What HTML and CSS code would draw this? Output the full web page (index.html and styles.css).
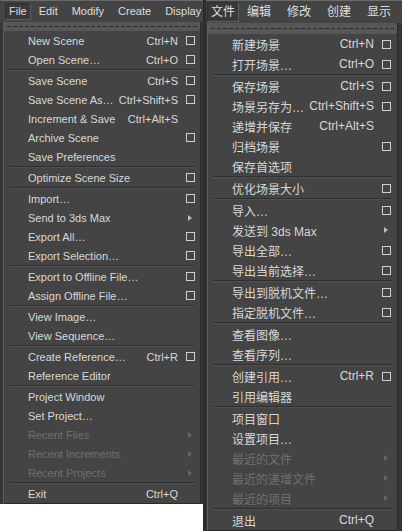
FILE: index.html
```html
<!DOCTYPE html>
<html lang="zh-CN">
<head>
<meta charset="UTF-8" />
<title>File menu</title>
<link rel="stylesheet" href="styles.css">
</head>
<body>
<div class="screen">
  <section class="panel en">
    <nav class="menubar">
      <span class="top on">File</span><span class="top">Edit</span><span class="top">Modify</span><span class="top">Create</span><span class="top">Display</span>
    </nav>
    <div class="dropdown">
      <div class="tearoff"><i></i></div>
      <div class="item"><span class="label">New Scene</span><span class="key">Ctrl+N</span><span class="box"></span></div>
      <div class="item"><span class="label">Open Scene…</span><span class="key">Ctrl+O</span><span class="box"></span></div>
      <div class="sep"></div>
      <div class="item"><span class="label">Save Scene</span><span class="key">Ctrl+S</span><span class="box"></span></div>
      <div class="item"><span class="label">Save Scene As…</span><span class="key">Ctrl+Shift+S</span><span class="box"></span></div>
      <div class="item"><span class="label">Increment &amp; Save</span><span class="key">Ctrl+Alt+S</span></div>
      <div class="item"><span class="label">Archive Scene</span><span class="box"></span></div>
      <div class="item"><span class="label">Save Preferences</span></div>
      <div class="sep"></div>
      <div class="item"><span class="label">Optimize Scene Size</span><span class="box"></span></div>
      <div class="sep"></div>
      <div class="item"><span class="label">Import…</span><span class="box"></span></div>
      <div class="item"><span class="label">Send to 3ds Max</span><span class="arrow"></span></div>
      <div class="item"><span class="label">Export All…</span><span class="box"></span></div>
      <div class="item"><span class="label">Export Selection…</span><span class="box"></span></div>
      <div class="sep"></div>
      <div class="item"><span class="label">Export to Offline File…</span><span class="box"></span></div>
      <div class="item"><span class="label">Assign Offline File…</span><span class="box"></span></div>
      <div class="sep"></div>
      <div class="item"><span class="label">View Image…</span></div>
      <div class="item"><span class="label">View Sequence…</span></div>
      <div class="sep"></div>
      <div class="item"><span class="label">Create Reference…</span><span class="key">Ctrl+R</span><span class="box"></span></div>
      <div class="item"><span class="label">Reference Editor</span></div>
      <div class="sep"></div>
      <div class="item"><span class="label">Project Window</span></div>
      <div class="item"><span class="label">Set Project…</span></div>
      <div class="item off"><span class="label">Recent Files</span><span class="arrow"></span></div>
      <div class="item off"><span class="label">Recent Increments</span><span class="arrow"></span></div>
      <div class="item off"><span class="label">Recent Projects</span><span class="arrow"></span></div>
      <div class="sep"></div>
      <div class="item"><span class="label">Exit</span><span class="key">Ctrl+Q</span></div>
    </div>
  </section>
  <div class="divider"></div>
  <section class="panel zh">
    <nav class="menubar">
      <span class="top on">文件</span><span class="top">编辑</span><span class="top">修改</span><span class="top">创建</span><span class="top">显示</span>
    </nav>
    <div class="dropdown">
      <div class="tearoff"><i></i></div>
      <div class="item"><span class="label">新建场景</span><span class="key">Ctrl+N</span><span class="box"></span></div>
      <div class="item"><span class="label">打开场景…</span><span class="key">Ctrl+O</span><span class="box"></span></div>
      <div class="sep"></div>
      <div class="item"><span class="label">保存场景</span><span class="key">Ctrl+S</span><span class="box"></span></div>
      <div class="item"><span class="label">场景另存为…</span><span class="key">Ctrl+Shift+S</span><span class="box"></span></div>
      <div class="item"><span class="label">递增并保存</span><span class="key">Ctrl+Alt+S</span></div>
      <div class="item"><span class="label">归档场景</span><span class="box"></span></div>
      <div class="item"><span class="label">保存首选项</span></div>
      <div class="sep"></div>
      <div class="item"><span class="label">优化场景大小</span><span class="box"></span></div>
      <div class="sep"></div>
      <div class="item"><span class="label">导入…</span><span class="box"></span></div>
      <div class="item"><span class="label">发送到 3ds Max</span><span class="arrow"></span></div>
      <div class="item"><span class="label">导出全部…</span><span class="box"></span></div>
      <div class="item"><span class="label">导出当前选择…</span><span class="box"></span></div>
      <div class="sep"></div>
      <div class="item"><span class="label">导出到脱机文件…</span><span class="box"></span></div>
      <div class="item"><span class="label">指定脱机文件…</span><span class="box"></span></div>
      <div class="sep"></div>
      <div class="item"><span class="label">查看图像…</span></div>
      <div class="item"><span class="label">查看序列…</span></div>
      <div class="sep"></div>
      <div class="item"><span class="label">创建引用…</span><span class="key">Ctrl+R</span><span class="box"></span></div>
      <div class="item"><span class="label">引用编辑器</span></div>
      <div class="sep"></div>
      <div class="item"><span class="label">项目窗口</span></div>
      <div class="item"><span class="label">设置项目…</span></div>
      <div class="item off"><span class="label">最近的文件</span><span class="arrow"></span></div>
      <div class="item off"><span class="label">最近的递增文件</span><span class="arrow"></span></div>
      <div class="item off"><span class="label">最近的项目</span><span class="arrow"></span></div>
      <div class="sep"></div>
      <div class="item"><span class="label">退出</span><span class="key">Ctrl+Q</span></div>
    </div>
  </section>
</div>
</body>
</html>
```

FILE: styles.css
```css
html,body {margin:0;padding:0;background:#fff;font-family:"Liberation Sans","Noto Sans CJK SC",sans-serif;color:#d8d8d8;}
.screen {display:flex;align-items:flex-start;width:402px;height:531px;overflow:hidden;}

.panel {background:#363636;border-top:1px solid #6a6a6a;box-sizing:border-box;}
.panel.en {width:203px;font-size:11px;}
.panel.zh {width:196px;height:531px;font-size:12px;}
.divider {width:3px;align-self:stretch;background:#2c2c2c;}

/* menu bar */
.menubar {display:flex;align-items:center;background:#444;color:#dedede;white-space:nowrap;}
.en .menubar {height:21px;padding-left:5px;}
.zh .menubar {height:22px;padding-left:1px;}
.menubar .top {padding:0 8px;line-height:15px;}
.en .menubar .top {padding:0 7px;}
.en .menubar .top.on {margin-right:1px;}
.menubar .top.on {padding:0 3px;background:#393939;border:1px solid #2e2e2e;border-right-color:#5e5e5e;border-bottom-color:#5e5e5e;}
.zh .menubar .top {line-height:18px;}

/* dropdown */
.dropdown {background:#444;border-left:1px solid #5e5e5e;border-right:1px solid #2a2a2a;border-bottom:1px solid #2a2a2a;}
.en .dropdown {margin:0 2px 0 3px;}
.zh .dropdown {margin:0 4px 0 1px;}
.tearoff {background:#575757;display:flex;align-items:center;padding:0 3px;}
.en .tearoff {height:9px;}
.zh .tearoff {height:11px;}
.tearoff i {display:block;flex:1;height:1px;background:repeating-linear-gradient(to right,#2c2c2c 0 4px,transparent 4px 6px);}

.item {display:grid;grid-template-columns:minmax(0,1fr) auto 9px;column-gap:8px;align-items:center;white-space:nowrap;}
.en .item {height:19px;padding:0 5px 0 24px;}
.zh .item {height:20px;padding:0 6px 0 24px;}
.item .label {grid-column:1;}
.item .key {grid-column:2;}
.item .box {grid-column:3;width:9px;height:9px;box-sizing:border-box;border:1px solid #cfcfcf;}
.item .arrow {grid-column:3;width:0;height:0;margin-left:2px;border-top:3px solid transparent;border-bottom:3px solid transparent;border-left:4px solid #bdbdbd;}
.item.off {color:#707070;}
.item.off .arrow {border-left-color:#666;}

.sep {height:0;margin:0 5px;border-top:1px solid #2f2f2f;border-bottom:1px solid #4f4f4f;}
```
